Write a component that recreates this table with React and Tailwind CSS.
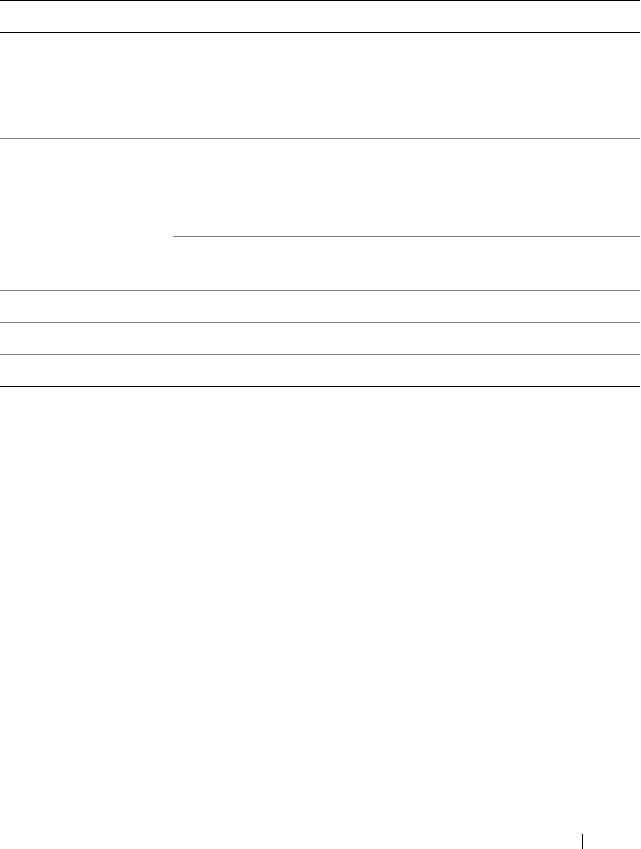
export default function App() {
  return (
    <div className="h-[849px] w-[641px] bg-white flex flex-col" style={{ fontFamily: '"Liberation Sans", Arial, sans-serif' }}>
      <div className="w-[640px] border-t border-black">
        <div className="h-[32px] border-b border-black"></div>
        <div className="h-[106px] border-b border-[#808080]"></div>
        <div className="flex border-b border-[#808080]">
          <div className="w-[173px]"></div>
          <div className="flex-1 flex flex-col">
            <div className="h-[98px] border-b border-[#808080]"></div>
            <div className="h-[53px]"></div>
          </div>
        </div>
        <div className="h-[32px] border-b border-[#808080]"></div>
        <div className="h-[32px] border-b border-[#808080]"></div>
        <div className="h-[32px] border-b border-black"></div>
      </div>
      <div className="mt-auto flex pl-[582px]">
        <div className="w-px h-[15px] bg-black"></div>
      </div>
    </div>
  );
}
